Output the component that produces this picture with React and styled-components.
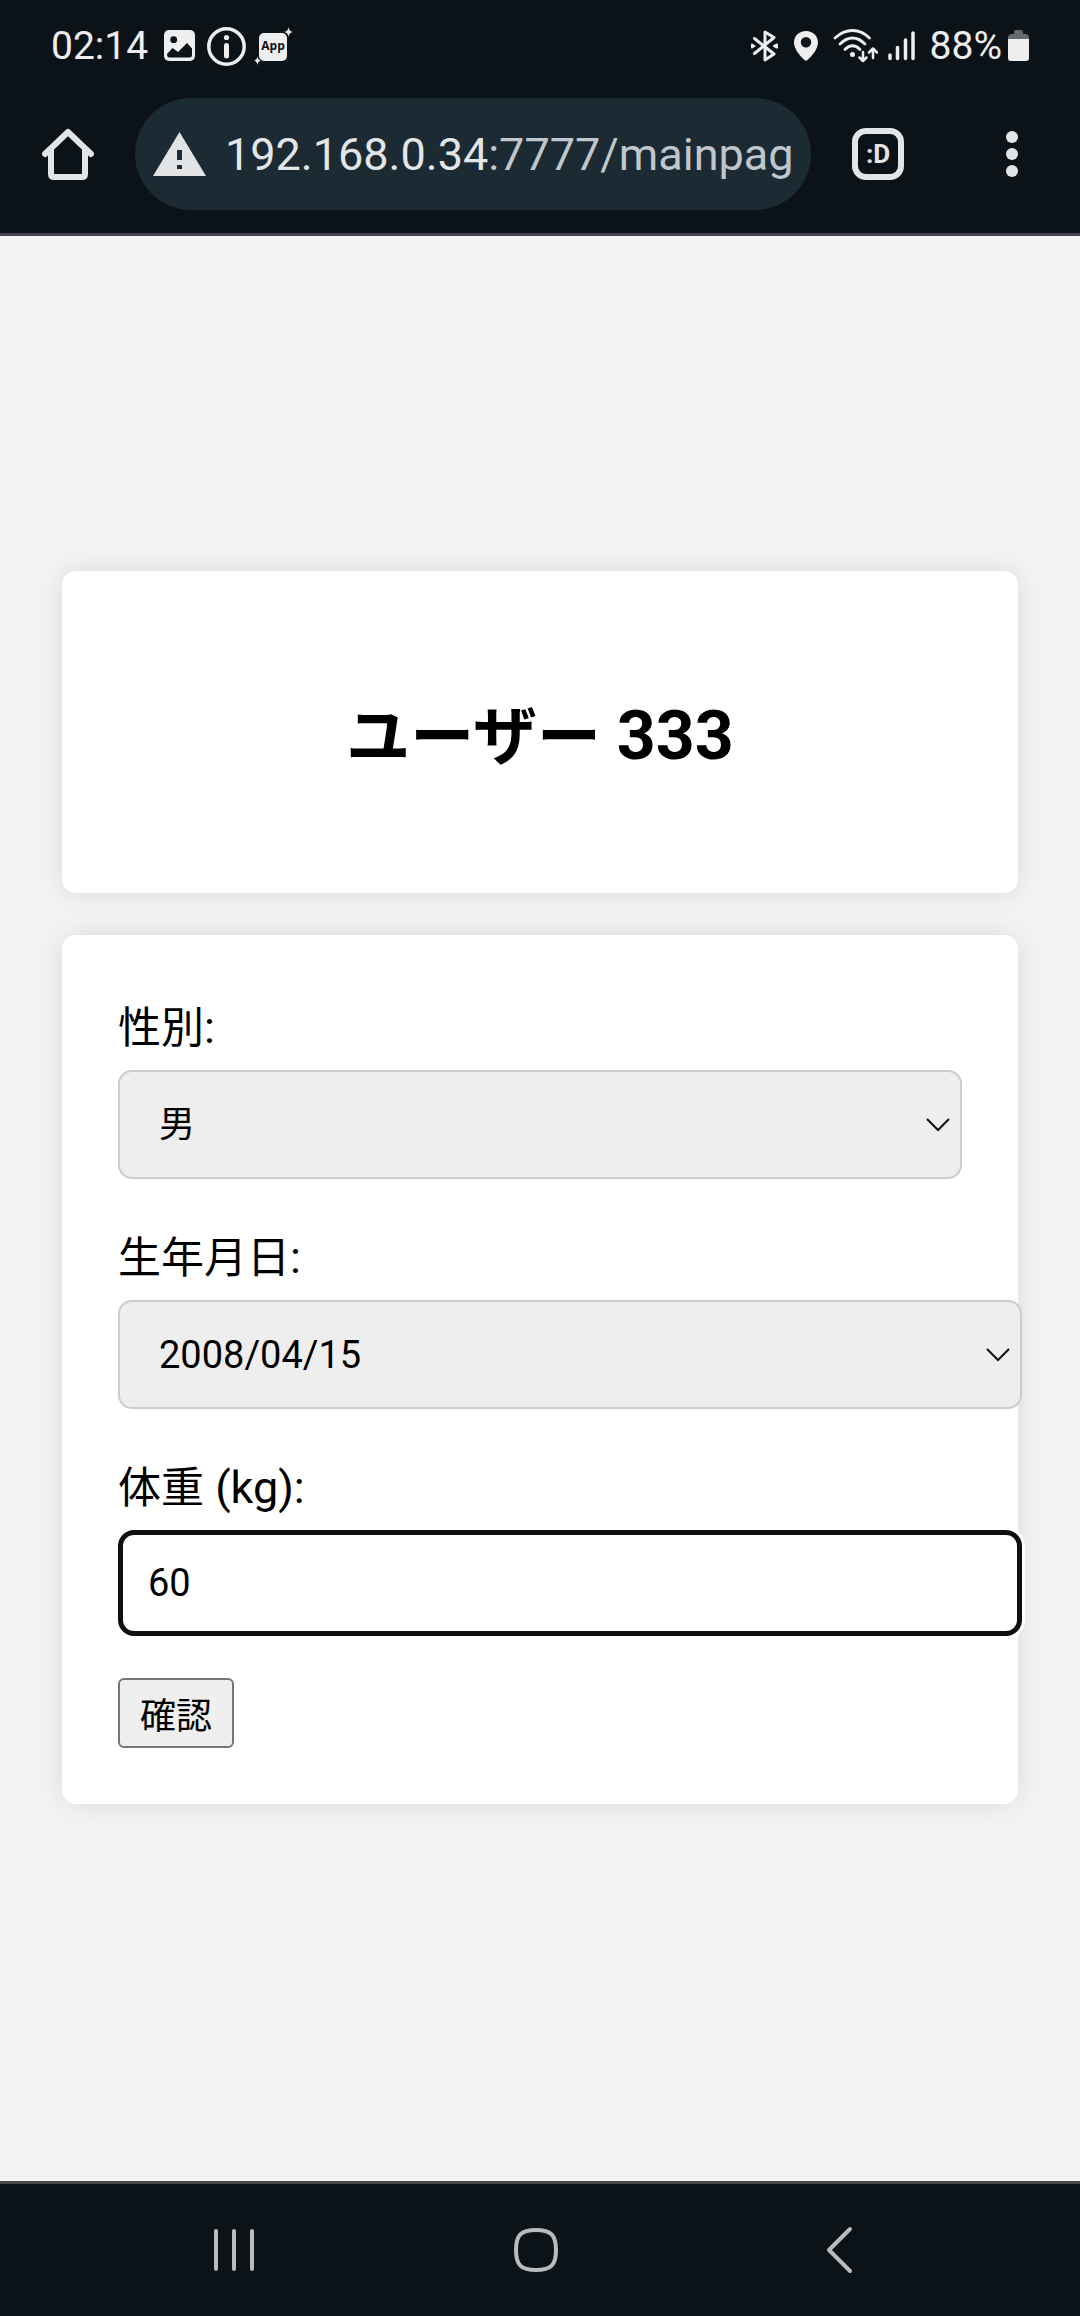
import React from "react";
import styled, { createGlobalStyle } from "styled-components";

const GlobalStyle = createGlobalStyle`
  body {
    margin: 0;
    background: #0c1318;
    font-family: Roboto, "Noto Sans CJK JP", sans-serif;
  }
`;

const Screen = styled.div`
  display: flex;
  flex-direction: column;
  min-height: 100vh;
`;

/* ---------- status bar ---------- */

const StatusBar = styled.header`
  display: flex;
  justify-content: space-between;
  align-items: center;
  height: 92px;
  padding: 0 51px;
  color: #eeeeee;
  font-size: 39px;
  line-height: 48px;
`;

const StatusGroup = styled.div`
  display: flex;
  align-items: center;
  gap: ${(p) => p.$gap}px;
`;

const BadgeText = styled.text`
  font: bold 12px "Open Sans", Roboto, sans-serif;
`;

/* ---------- browser toolbar ---------- */

const Toolbar = styled.nav`
  display: flex;
  align-items: center;
  gap: 41px;
  padding: 6px 42px 23px;
  border-bottom: 3px solid #44484c;
`;

const IconButton = styled.button`
  display: flex;
  justify-content: center;
  align-items: center;
  width: 52px;
  height: 52px;
  margin: 0 0 0 ${(p) => p.$indent || 0}px;
  padding: 0;
  border: 0;
  background: none;
  color: #e3e4e6;
`;

const TabText = styled.text`
  font: bold 26px Roboto, sans-serif;
`;

const AddressBar = styled.button`
  display: flex;
  flex: 1;
  align-items: center;
  gap: 19px;
  min-width: 0;
  height: 112px;
  padding: 0 18px;
  border: 0;
  border-radius: 56px;
  background: #1b2a33;
  color: #c0c7cc;
  font: 45px/56px Roboto, sans-serif;
`;

const Url = styled.span`
  flex: 1;
  overflow: hidden;
  padding-top: 2px;
  text-align: left;
  white-space: nowrap;
`;

const Host = styled.span`
  color: #e3e5e7;
`;

/* ---------- page ---------- */

const Page = styled.main`
  display: flex;
  flex: 1;
  flex-direction: column;
  justify-content: center;
  padding: 0 62px;
  background: #f3f3f3;
  color: #000;
`;

const Card = styled.section`
  margin-bottom: 42px;
  padding: 56px;
  border-radius: 14px;
  background: #fff;
  box-shadow: 0 0 28px rgba(0, 0, 0, 0.1);
`;

const Title = styled.h2`
  margin: 56px 0 44px;
  font-size: 64px;
  line-height: 110px;
  text-align: center;
`;

const Latin = styled.span`
  font-size: ${(p) => p.$size}px;
  line-height: 1;
`;

const Form = styled.form`
  display: flex;
  flex-direction: column;
  align-items: flex-start;
  gap: 42px;
`;

const Field = styled.div`
  display: flex;
  flex-direction: column;
  gap: 4px;
  width: 100%;
`;

const Label = styled.label`
  font-size: 43px;
  line-height: 75px;
`;

const SelectBox = styled.div`
  position: relative;
  width: ${(p) => (p.$wide ? "calc(100% + 60px)" : "100%")};
`;

const Select = styled.select`
  display: block;
  box-sizing: border-box;
  width: 100%;
  height: 109px;
  padding: 0 56px 0 39px;
  border: 2px solid #cccccc;
  border-radius: 14px;
  appearance: none;
  background: #eeeeee;
  color: #000;
  font-family: inherit;
  font-size: ${(p) => p.$size}px;
`;

const Chevron = styled.svg`
  position: absolute;
  top: 48px;
  right: 12px;
  pointer-events: none;
`;

const NumberInput = styled.input`
  box-sizing: border-box;
  width: calc(100% + 60px);
  height: 106px;
  padding: 0 25px;
  border: 5px solid #101010;
  border-radius: 16px;
  outline: 0;
  appearance: textfield;
  background: #fff;
  box-shadow: 0 0 0 3px #fff;
  color: #000;
  font: 38px Roboto, sans-serif;

  &::-webkit-inner-spin-button {
    appearance: none;
    margin: 0;
  }
`;

const SubmitButton = styled.button`
  height: 70px;
  padding: 0 20px;
  border: 2px solid #767676;
  border-radius: 6px;
  background: #efefef;
  color: #000;
  font-family: inherit;
  font-size: 36px;
`;

/* ---------- system navigation ---------- */

const SystemNav = styled.footer`
  display: grid;
  grid-template-columns: repeat(3, 1fr);
  justify-items: center;
  align-items: center;
  height: 132px;
  padding: 0 90px 0 83px;
  border-top: 3px solid #44484c;
`;

/* ---------- drawings ---------- */

const PhotoIcon = () => (
  <svg width="43" height="32" viewBox="-8 0 43 32" aria-hidden="true">
    <rect width="31" height="31" rx="5" fill="#eee" />
    <circle cx="9.7" cy="9.7" r="3.4" fill="#0c1318" />
    <path d="M3 24 L8.5 18 L14 22 L23 13 L28 18.5 V25 Q28 27.5 25.5 27.5 H5.5 Q3 27.5 3 24 Z" fill="#0c1318" />
  </svg>
);

const InfoIcon = () => (
  <svg width="39" height="39" viewBox="0 0 39 39" fill="none" stroke="#eee" aria-hidden="true">
    <circle cx="19.5" cy="19.5" r="17.7" strokeWidth="3.5" />
    <path d="M19.5 18.5 V29" strokeWidth="5" strokeLinecap="round" />
    <circle cx="19.5" cy="10.5" r="2.6" fill="#eee" stroke="none" />
  </svg>
);

const AppIcon = () => (
  <svg width="39" height="39" viewBox="0 0 39 39" fill="#eee" aria-hidden="true">
    <rect x="5" y="6" width="28" height="28" rx="5" />
    <path
      d="M34.5 0 Q35 4.5 39 5 Q35 5.5 34.5 10 Q34 5.5 30 5 Q34 4.5 34.5 0 Z"
      stroke="#0c1318"
      strokeWidth="1.5"
      paintOrder="stroke"
    />
    <path
      d="M3.5 29.5 Q4 33 7 33.5 Q4 34 3.5 38 Q3 34 0 33.5 Q3 33 3.5 29.5 Z"
      stroke="#0c1318"
      strokeWidth="1.5"
      paintOrder="stroke"
    />
    <BadgeText x="19" y="23" textAnchor="middle" fill="#0c1318">
      App
    </BadgeText>
  </svg>
);

const BluetoothIcon = () => (
  <svg width="36" height="32" viewBox="0 0 36 32" fill="none" stroke="#eee" strokeWidth="3" strokeLinecap="round" strokeLinejoin="round" aria-hidden="true">
    <path d="M8.5 8.5 L28 24 L19 30 V2 L28 7.5 L8.5 23.5" />
    <path d="M6 14.5 L8.5 16 L6 17.5 Z M31 14.5 L28 16 L31 17.5 Z" strokeWidth="2" fill="#eee" />
  </svg>
);

const PinIcon = () => (
  <svg width="39" height="32" viewBox="0 0 39 32" aria-hidden="true">
    <path
      fillRule="evenodd"
      fill="#eee"
      d="M18 1 C25 1 30 6 30 12.5 C30 18.5 25 25 19.5 30 Q18 31.5 16.5 30 C11 25 6 18.5 6 12.5 C6 6 11 1 18 1 Z M18 7 A5.2 5.2 0 1 0 18 17.4 A5.2 5.2 0 1 0 18 7 Z"
    />
  </svg>
);

const WifiIcon = () => (
  <svg width="45" height="34" viewBox="0 0 45 34" fill="none" stroke="#eee" strokeWidth="2.8" strokeLinecap="round" strokeLinejoin="round" aria-hidden="true">
    <path d="M2 9 Q10 1.5 19.5 1.5 Q29 1.5 36.5 9" />
    <path d="M7 15 Q13 9 19.5 9 Q26 9 32 15" />
    <path d="M12 20.5 Q19.5 13 27 20.5" />
    <circle cx="19.5" cy="25.5" r="2.5" fill="#eee" stroke="none" />
    <path d="M30 23 V31.5 M26.5 28.5 L30 32 L33.5 28.5" strokeWidth="2.5" />
    <path d="M40 29 V20 M36 23.5 L40 19.5 L44 23.5" strokeWidth="2.5" />
  </svg>
);

const SignalIcon = () => (
  <svg width="40" height="32" viewBox="0 0 40 32" stroke="#eee" strokeWidth="3.5" strokeLinecap="round" aria-hidden="true">
    <path d="M6 25 V28.5 M13.5 17.5 V28.5 M21.5 10 V28.5 M29 3 V28.5" />
  </svg>
);

const BatteryIcon = () => (
  <svg width="21" height="32" viewBox="0 0 21 32" aria-hidden="true">
    <path d="M6 2 Q6 0 8 0 H13 Q15 0 15 2 V4 H18 Q21 4.5 21 8 V11 H0 V8 Q0 4.5 3 4 H6 Z" fill="#66696c" />
    <path d="M0 9 H21 V28 Q21 31 18 31 H3 Q0 31 0 28 Z" fill="#eee" />
  </svg>
);

const HomeIcon = () => (
  <svg width="52" height="52" viewBox="0 0 52 52" fill="none" stroke="currentColor" strokeWidth="6" aria-hidden="true">
    <path d="M3 26 L26 4 L49 26" strokeLinecap="round" strokeLinejoin="round" />
    <path d="M9 22 V46 Q9 49 12 49 H40 Q43 49 43 46 V22" />
  </svg>
);

const WarningIcon = () => (
  <svg width="53" height="44" viewBox="0 0 53 44" aria-hidden="true">
    <path d="M26.5 0 L53 44 H0 Z" fill="#e1e3e5" />
    <path d="M24 18 H29 V28 H24 Z M24 33 H29 V37 H24 Z" fill="#1b2a33" />
  </svg>
);

const TabsIcon = () => (
  <svg width="52" height="52" viewBox="0 0 52 52" aria-hidden="true">
    <rect x="3" y="3" width="46" height="46" rx="11" fill="none" stroke="currentColor" strokeWidth="6" />
    <TabText x="26" y="35" textAnchor="middle" fill="currentColor">
      :D
    </TabText>
  </svg>
);

const MenuIcon = () => (
  <svg width="12" height="46" viewBox="0 0 12 46" fill="currentColor" aria-hidden="true">
    <circle cx="6" cy="6" r="6" />
    <circle cx="6" cy="23" r="6" />
    <circle cx="6" cy="40" r="6" />
  </svg>
);

const ChevronIcon = () => (
  <Chevron width="24" height="14" viewBox="0 0 24 14" fill="none" stroke="#101010" strokeWidth="2" aria-hidden="true">
    <path d="M1 1 L12 12 L23 1" />
  </Chevron>
);

const NavIcon = ({ d, width }) => (
  <svg width="52" height="52" viewBox="0 0 52 52" fill="none" stroke="#b9bbbd" strokeWidth={width} strokeLinecap="round" strokeLinejoin="round" aria-hidden="true">
    <path d={d} />
  </svg>
);

export default function App() {
  return (
    <Screen>
      <GlobalStyle />
      <StatusBar>
        <StatusGroup $gap={8}>
          <span>02:14</span>
          <PhotoIcon />
          <InfoIcon />
          <AppIcon />
        </StatusGroup>
        <StatusGroup $gap={6}>
          <BluetoothIcon />
          <PinIcon />
          <WifiIcon />
          <SignalIcon />
          <span>88%</span>
          <BatteryIcon />
        </StatusGroup>
      </StatusBar>

      <Toolbar>
        <IconButton type="button" aria-label="ホーム">
          <HomeIcon />
        </IconButton>
        <AddressBar type="button">
          <WarningIcon />
          <Url>
            <Host>192.168.0.34</Host>:7777/mainpag
          </Url>
        </AddressBar>
        <IconButton type="button" aria-label="タブ">
          <TabsIcon />
        </IconButton>
        <IconButton type="button" aria-label="メニュー" $indent={41}>
          <MenuIcon />
        </IconButton>
      </Toolbar>

      <Page>
        <Card>
          <Title>
            ユーザー <Latin $size={68}>333</Latin>
          </Title>
        </Card>
        <Card>
          <Form onSubmit={(event) => event.preventDefault()}>
            <Field>
              <Label htmlFor="gender">
                性別<Latin $size={45}>:</Latin>
              </Label>
              <SelectBox>
                <Select id="gender" $size={36} defaultValue="male">
                  <option value="male">男</option>
                  <option value="female">女</option>
                </Select>
                <ChevronIcon />
              </SelectBox>
            </Field>
            <Field>
              <Label htmlFor="birthday">
                生年月日<Latin $size={45}>:</Latin>
              </Label>
              <SelectBox $wide>
                <Select id="birthday" $size={38} defaultValue="2008-04-15">
                  <option value="2008-04-15">2008/04/15</option>
                </Select>
                <ChevronIcon />
              </SelectBox>
            </Field>
            <Field>
              <Label htmlFor="weight">
                体重<Latin $size={45}> (kg):</Latin>
              </Label>
              <NumberInput id="weight" type="number" defaultValue="60" />
            </Field>
            <SubmitButton type="submit">確認</SubmitButton>
          </Form>
        </Card>
      </Page>

      <SystemNav>
        <IconButton type="button" aria-label="履歴">
          <NavIcon width={4} d="M8 7 V45 M26 7 V45 M44 7 V45" />
        </IconButton>
        <IconButton type="button" aria-label="ホーム画面">
          <NavIcon width={4} d="M26 6 C41 6 46 11 46 26 C46 41 41 46 26 46 C11 46 6 41 6 26 C6 11 11 6 26 6 Z" />
        </IconButton>
        <IconButton type="button" aria-label="戻る">
          <NavIcon width={4} d="M37 5 L16 26 L37 47" />
        </IconButton>
      </SystemNav>
    </Screen>
  );
}
